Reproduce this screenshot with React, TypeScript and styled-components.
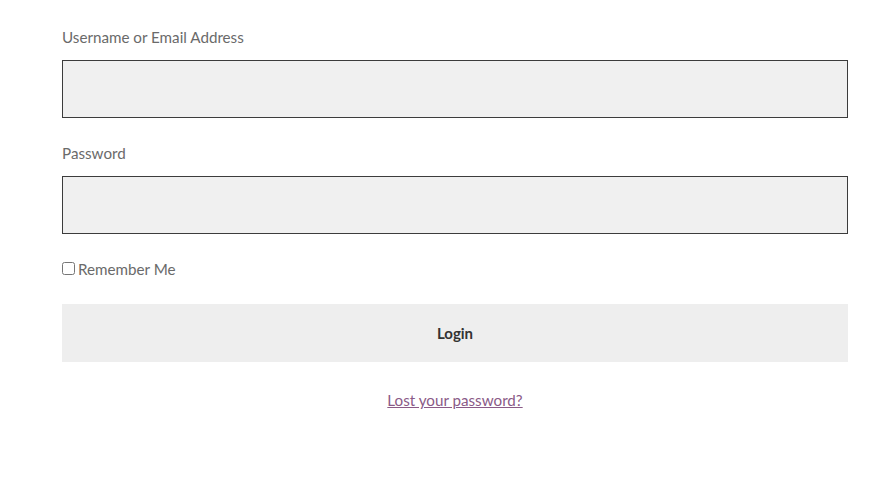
import React from "react";
import styled, { createGlobalStyle } from "styled-components";

const Global = createGlobalStyle`
  html, body { margin: 0; padding: 0; background: #ffffff; }
  body { font-family: Lato, "Liberation Sans", sans-serif; }
  * { box-sizing: border-box; }
`;

const Form = styled.form`
  width: 786px;
  margin-left: 62px;
  padding-top: 25px;
  display: flex;
  flex-direction: column;
`;

const Field = styled.div`
  display: flex;
  flex-direction: column;
  margin-bottom: 23px;
`;

const Label = styled.label`
  display: block;
  font-size: 15.2px;
  line-height: 24px;
  color: #6a6a6a;
  margin-bottom: 11px;
`;

const Input = styled.input`
  display: block;
  width: 100%;
  height: 58px;
  margin: 0;
  padding: 0 12px;
  background: #f0f0f0;
  border: 1px solid #3c3c3c;
  border-radius: 0;
  font-size: 16px;
  outline: none;
`;

const CheckRow = styled.label`
  display: flex;
  align-items: center;
  height: 24px;
  font-size: 15.2px;
  line-height: 24px;
  color: #6a6a6a;
  margin-bottom: 23px;
`;

const Check = styled.input`
  width: 13px;
  height: 13px;
  margin: 0 3px 2px 0;
`;

const Button = styled.button`
  width: 100%;
  height: 58px;
  border: none;
  border-radius: 0;
  background: #eeeeee;
  color: #333333;
  font-family: Lato, "Liberation Sans", sans-serif;
  font-weight: 700;
  font-size: 15px;
  cursor: pointer;
`;

const LinkRow = styled.div`
  margin-top: 26px;
  text-align: center;
  line-height: 24px;
  font-size: 15.2px;
`;

const Lost = styled.a`
  color: #8a5a87;
  text-decoration: underline;
`;

export default function App() {
  return (
    <>
      <Global />
      <Form onSubmit={(e) => e.preventDefault()}>
        <Field>
          <Label htmlFor="user">Username or Email Address</Label>
          <Input id="user" type="text" />
        </Field>
        <Field>
          <Label htmlFor="pass">Password</Label>
          <Input id="pass" type="password" />
        </Field>
        <CheckRow>
          <Check type="checkbox" />
          Remember Me
        </CheckRow>
        <Button type="submit">Login</Button>
        <LinkRow>
          <Lost href="#">Lost your password?</Lost>
        </LinkRow>
      </Form>
    </>
  );
}
